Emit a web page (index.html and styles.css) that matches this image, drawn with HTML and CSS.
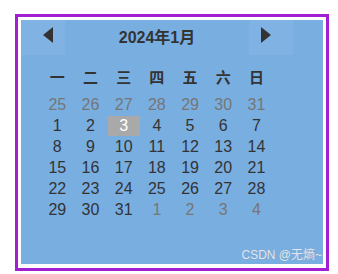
FILE: index.html
```html
<!DOCTYPE html>
<html lang="zh">
<head>
<meta charset="utf-8">
<link rel="stylesheet" href="styles.css">
</head>
<body>
<div class="frame">
  <div class="cal">
    <div class="head">
      <div class="nav prev"><svg width="10" height="16" viewBox="0 0 10 16"><polygon points="10,0 10,16 0,8" fill="#333"/></svg></div>
      <div class="title">2024年1月</div>
      <div class="nav next"><svg width="10" height="16" viewBox="0 0 10 16"><polygon points="0,0 0,16 10,8" fill="#333"/></svg></div>
    </div>
    <div class="grid week">
      <span>一</span><span>二</span><span>三</span><span>四</span><span>五</span><span>六</span><span>日</span>
    </div>
    <div class="grid days">
      <span class="o">25</span><span class="o">26</span><span class="o">27</span><span class="o">28</span><span class="o">29</span><span class="o">30</span><span class="o">31</span>
      <span>1</span><span>2</span><span class="sel">3</span><span>4</span><span>5</span><span>6</span><span>7</span>
      <span>8</span><span>9</span><span>10</span><span>11</span><span>12</span><span>13</span><span>14</span>
      <span>15</span><span>16</span><span>17</span><span>18</span><span>19</span><span>20</span><span>21</span>
      <span>22</span><span>23</span><span>24</span><span>25</span><span>26</span><span>27</span><span>28</span>
      <span>29</span><span>30</span><span>31</span><span class="o">1</span><span class="o">2</span><span class="o">3</span><span class="o">4</span>
    </div>
    <div class="mark">CSDN @无熵~</div>
  </div>
</div>
</body>
</html>
```
FILE: styles.css
```css
html, body {
  margin: 0;
  padding: 0;
  background: #fff;
}
body {
  font-family: "Liberation Sans", "Noto Sans CJK SC", sans-serif;
  color: #333;
}
.frame {
  margin: 14px 0 0 15px;
  width: 302px;
  border: 3px solid #a21fd3;
  padding: 3px 3px 4px 3px;
  background: #fff;
}
.cal {
  position: relative;
  width: 302px;
  height: 244px;
  background: #79aee1;
}
.head {
  display: flex;
  height: 35px;
}
.nav {
  width: 44px;
  height: 35px;
  background: #80b3e4;
  display: flex;
  align-items: flex-start;
}
.nav svg {
  display: block;
  margin-top: 7px;
}
.prev svg { margin-left: 22px; }
.next svg { margin-left: 12px; }
.title {
  width: 184px;
  text-align: center;
  font-size: 16px;
  font-weight: bold;
  line-height: 35px;
  color: #333;
}
.grid {
  display: grid;
  grid-template-columns: repeat(7, 32px);
  column-gap: 1.2px;
  row-gap: 1px;
  grid-auto-rows: 20px;
  margin-left: 20.3px;
}
.grid span {
  text-align: center;
  line-height: 20px;
}
.week {
  margin-top: 13px;
  font-size: 15px;
  font-weight: bold;
  color: #333;
}
.days {
  margin-top: 7px;
  font-size: 16px;
  color: #333;
}
.days .o {
  color: #767676;
}
.days .sel {
  background: #a9a9a9;
  color: #fff;
}
.mark {
  position: absolute;
  right: 1px;
  bottom: 2px;
  font-size: 12px;
  color: #dde8f3;
  text-shadow: 0 0 1px #8a9bb0;
}
```
